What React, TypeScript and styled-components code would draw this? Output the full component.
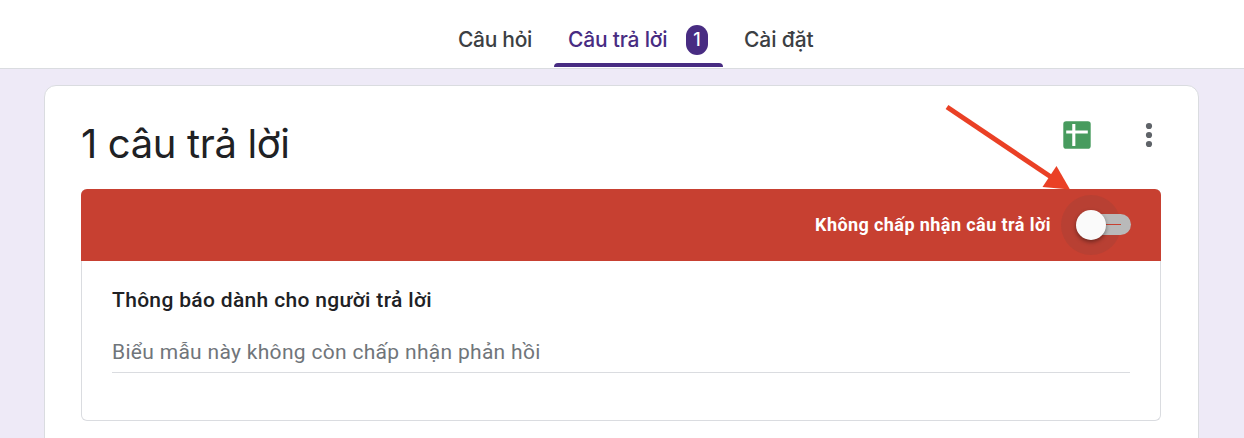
import React from "react";
import styled, { createGlobalStyle } from "styled-components";

const GlobalStyle = createGlobalStyle`
  *, *::before, *::after { box-sizing: border-box; }
  html, body { margin: 0; height: 100%; overflow: hidden; }
  body { background: #eeeaf7; font-family: Roboto, "Liberation Sans", sans-serif; color: #202124; }
`;

const Page = styled.div`
  height: 438px;
  overflow: hidden;
`;

const TabBar = styled.nav`
  display: flex;
  height: 69px;
  padding-left: 444px;
  background: #fff;
  border-bottom: 1px solid #dadce0;
`;

const Tab = styled.div<{ $active?: boolean; $width: number; $spacing: number }>`
  display: flex;
  flex-direction: column;
  justify-content: space-between;
  width: ${(p) => p.$width}px;
  height: 67px;
  padding-top: 24px;
  color: ${(p) => (p.$active ? "#482c82" : "#3c4043")};
  font: 500 21px/32px Inter, "Liberation Sans", sans-serif;
  letter-spacing: ${(p) => p.$spacing}px;
  white-space: nowrap;
`;

const TabLabel = styled.div<{ $inset?: number }>`
  display: flex;
  align-items: center;
  justify-content: space-between;
  height: 32px;
  padding: 0 15px 0 ${(p) => p.$inset ?? 14}px;
`;

const Badge = styled.span`
  width: 22px;
  height: 30px;
  border-radius: 11px;
  background: #482c82;
  color: #fff;
  font-size: 18px;
  line-height: 30px;
  letter-spacing: 0;
  text-align: center;
`;

const Indicator = styled.div`
  height: 4px;
  border-radius: 4px 4px 0 0;
  background: #482c82;
`;

const Card = styled.main`
  width: 1155px;
  height: 400px;
  margin: 16px 0 0 44px;
  padding: 0 37px 0 36px;
  background: #fff;
  border: 1px solid #dadce0;
  border-radius: 12px;
`;

const CardHeader = styled.header`
  display: flex;
  justify-content: space-between;
  height: 103px;
`;

const Title = styled.h1`
  margin: 34px 0 0;
  font: 430 40px/48px Inter, "Liberation Sans", sans-serif;
  letter-spacing: -0.35px;
  white-space: nowrap;
`;

const Actions = styled.div`
  display: flex;
  align-items: center;
  gap: 54px;
  height: 28px;
  margin: 35px 8px 0 0;
`;

const Panel = styled.section`
  height: 232px;
  border: 1px solid #dadce0;
  border-top: 0;
  border-radius: 6px;
`;

const Banner = styled.div`
  display: flex;
  align-items: center;
  justify-content: flex-end;
  height: 72px;
  margin: 0 -1px;
  padding-right: 30px;
  background: #c74031;
  border-radius: 6px 6px 0 0;
  color: #fff;
`;

const BannerText = styled.span`
  margin-right: 25px;
  font-size: 18px;
  font-weight: 700;
  line-height: 24px;
  letter-spacing: 0.42px;
  white-space: nowrap;
`;

const Switch = styled.div`
  display: flex;
  align-items: center;
  width: 55px;
  height: 30px;
`;

const Halo = styled.div`
  flex: none;
  width: 60px;
  height: 60px;
  margin: 0 -30px 0 -15px;
  border-radius: 50%;
  background: rgba(60, 64, 67, 0.1);
`;

const Knob = styled.div`
  flex: none;
  z-index: 1;
  width: 30px;
  height: 30px;
  margin-left: -15px;
  border-radius: 50%;
  background: #fafafa;
  box-shadow: 0 2px 4px rgba(0, 0, 0, 0.4);
`;

const Track = styled.div`
  flex: none;
  display: flex;
  align-items: center;
  width: 40px;
  height: 21px;
  margin: 0 0 1px -15px;
  border-radius: 11px;
  background: #b9b9b9;
`;

const TrackMark = styled.div`
  width: 15px;
  height: 1px;
  margin-left: 15px;
  background: #c74031;
`;

const Message = styled.div`
  padding: 26px 30px 0;
`;

const Label = styled.div`
  font-size: 21px;
  font-weight: 500;
  line-height: 26px;
  letter-spacing: 0.33px;
  white-space: nowrap;
`;

const Field = styled.div`
  height: 47px;
  margin-top: 13px;
  padding-top: 13px;
  border-bottom: 1px solid #dadce0;
  color: #70757a;
  font-size: 21px;
  line-height: 26px;
  letter-spacing: 0.31px;
  white-space: nowrap;
`;

const Arrow = styled.svg`
  position: absolute;
  left: 940px;
  top: 100px;
`;

const SheetIcon = () => (
  <svg width="28" height="28" viewBox="0 0 28 28">
    <rect x="0.3" y="0.3" width="27.4" height="27.4" rx="2.8" fill="#479b5e" />
    <path d="M10.8 3v22M3.2 11h21.6" stroke="#fff" strokeWidth="3.1" />
  </svg>
);

const MoreIcon = () => (
  <svg width="8" height="28" viewBox="0 0 8 28" fill="#5f6368">
    <circle cx="4" cy="5" r="3.1" />
    <circle cx="4" cy="14" r="3.1" />
    <circle cx="4" cy="23" r="3.1" />
  </svg>
);

export default function App() {
  return (
    <Page>
      <GlobalStyle />
      <TabBar>
        <Tab $width={110} $spacing={-0.3}><TabLabel>Câu hỏi</TabLabel></Tab>
        <Tab $active $width={169} $spacing={-0.2}>
          <TabLabel>Câu trả lời<Badge>1</Badge></TabLabel>
          <Indicator />
        </Tab>
        <Tab $width={116} $spacing={-0.1}>
          <TabLabel $inset={21}>Cài đặt</TabLabel>
        </Tab>
      </TabBar>
      <Card>
        <CardHeader>
          <Title>1 câu trả lời</Title>
          <Actions><SheetIcon /><MoreIcon /></Actions>
        </CardHeader>
        <Panel>
          <Banner>
            <BannerText>Không chấp nhận câu trả lời</BannerText>
            <Switch>
              <Halo />
              <Knob />
              <Track><TrackMark /></Track>
            </Switch>
          </Banner>
          <Message>
            <Label>Thông báo dành cho người trả lời</Label>
            <Field>Biểu mẫu này không còn chấp nhận phản hồi</Field>
          </Message>
        </Panel>
      </Card>
      <Arrow width="140" height="100" viewBox="0 0 140 100">
        <path d="M7 7 111 77" stroke="#ea4025" strokeWidth="5" />
        <path d="M116.5 66 130 89.5 102.5 87Z" fill="#ea4025" />
      </Arrow>
    </Page>
  );
}
